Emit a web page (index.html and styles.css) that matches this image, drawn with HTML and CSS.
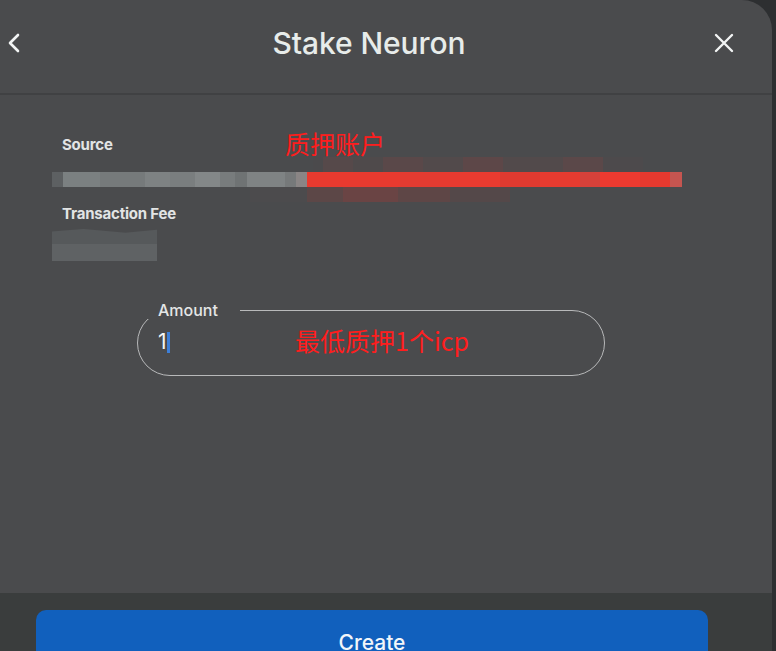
FILE: index.html
```html
<!DOCTYPE html>
<html lang="en">
<head>
<meta charset="utf-8">
<title>Stake Neuron</title>
<link rel="stylesheet" href="styles.css">
</head>
<body>
<div class="dialog">
  <header class="header">
    <button class="icon-btn back" aria-label="Back">
      <svg width="14" height="20" viewBox="0 0 14 20"><path d="M11 2 L3 10 L11 18" fill="none" stroke="#f2f4f4" stroke-width="2.6" stroke-linecap="round" stroke-linejoin="round"/></svg>
    </button>
    <h1 class="title">Stake Neuron</h1>
    <button class="icon-btn close" aria-label="Close">
      <svg width="20" height="20" viewBox="0 0 20 20"><path d="M2 2 L18 18 M18 2 L2 18" fill="none" stroke="#f2f4f4" stroke-width="2.4" stroke-linecap="round"/></svg>
    </button>
  </header>

  <main class="content">
    <section class="info">
      <div class="label">Source</div>
      <div class="blur-wrap">
        <div class="blur-above"></div>
        <div class="addr-bar"></div>
        <div class="blur-below"></div>
      </div>
      <div class="label fee-label">Transaction Fee</div>
      <div class="fee-blur"></div>
      <span class="note note-source">质押账户</span>
    </section>

    <fieldset class="amount">
      <legend class="amount-legend">Amount</legend>
      <div class="amount-value"><span class="digit">1</span><span class="caret"></span></div>
      <span class="note note-amount">最低质押1个icp</span>
    </fieldset>
  </main>

  <footer class="footer">
    <button class="create">Create</button>
  </footer>
</div>
</body>
</html>
```

FILE: styles.css
```css
* { box-sizing: border-box; }

html, body {
  margin: 0;
  padding: 0;
  height: 651px;
  overflow: hidden;
  background: #2d2f31;
  font-family: Inter, "Noto Sans", sans-serif;
}

.dialog {
  width: 772px;
  height: 651px;
  background: #4a4b4d;
  border-top-right-radius: 30px;
  display: flex;
  flex-direction: column;
  overflow: hidden;
}

.header {
  height: 95px;
  flex: none;
  display: flex;
  align-items: flex-start;
  justify-content: space-between;
  padding: 26px 36px 0 2px;
  border-bottom: 2px solid #404143;
}

.icon-btn {
  background: none;
  border: none;
  padding: 0;
  width: 24px;
  height: 34px;
  display: flex;
  align-items: center;
  justify-content: center;
  cursor: pointer;
}

.title {
  margin: 0;
  font-size: 30px;
  font-weight: 500;
  color: #e7ecea;
  line-height: 34px;
  letter-spacing: -0.1px;
}

.content {
  flex: 1;
  padding: 41px 0 0 62px;
  display: flex;
  flex-direction: column;
}

.info {
  position: relative;
  display: flex;
  flex-direction: column;
}

.label {
  font-size: 15px;
  font-weight: 700;
  color: #e2e4e4;
  line-height: 18px;
  letter-spacing: -0.2px;
}

.blur-wrap {
  margin: 3px 0 0 -10px;
  display: flex;
  flex-direction: column;
}

.blur-above {
  height: 15px;
  margin-left: 261px;
  width: 330px;
  background: linear-gradient(90deg,
    #4b4a4c 0 10px, #56494a 10px 40px, #4f4a4b 40px 70px, #5a4849 70px 110px,
    #524a4b 110px 150px, #5d4748 150px 190px, #524a4b 190px 250px, #5b4849 250px 290px, #4d4a4c 290px 330px);
}

.addr-bar {
  height: 15px;
  width: 630px;
  background: linear-gradient(90deg,
    #5d6062 0 11px, #7b8081 11px 48px, #767a7b 48px 93px, #7e8283 93px 118px,
    #7a7e7f 118px 143px, #838788 143px 168px, #787c7d 168px 183px, #6f7374 183px 195px,
    #7f8384 195px 233px, #76797a 233px 244px, #8a8585 244px 255px,
    #e83a2f 255px 348px, #e33b31 348px 388px, #e73a30 388px 408px, #e93b30 408px 448px,
    #df3a30 448px 488px, #e63b30 488px 528px, #d6413a 528px 548px, #ec3a30 548px 588px,
    #e5392f 588px 618px, #c55550 618px 630px);
}

.blur-below {
  height: 15px;
  margin-left: 198px;
  width: 260px;
  background: linear-gradient(90deg,
    #4c4b4d 0 57px, #5c4747 57px 93px, #6a4444 93px 148px, #5e4646 148px 200px, #544849 200px 260px);
}

.fee-label {
  margin-top: 3px;
}

.fee-blur {
  margin: 6px 0 0 -10px;
  width: 105px;
  height: 32px;
  background: linear-gradient(180deg, #56595b 0 15px, #5f6264 15px 32px);
  clip-path: polygon(0 8%, 30% 0, 70% 12%, 100% 2%, 100% 100%, 0 100%);
}

.note {
  position: absolute;
  color: #ff1d1d;
  font-family: "Noto Sans CJK SC", sans-serif;
  font-size: 25px;
  line-height: 30px;
  font-weight: 400;
  white-space: nowrap;
}

.note-source {
  left: 223px;
  top: -8px;
}

.amount {
  position: relative;
  margin: 40px 0 0 75px;
  width: 468px;
  height: 75px;
  padding: 0 0 0 20px;
  border: 1.5px solid #b8b9ba;
  border-radius: 33px;
  min-inline-size: 0;
}

.amount-legend {
  padding: 0 22px 0 20px;
  margin-left: -20px;
  font-size: 16px;
  font-weight: 500;
  color: #e4e6e6;
  line-height: 18px;
}

.amount-value {
  display: flex;
  align-items: center;
  height: 46px;
}

.digit {
  font-size: 21px;
  color: #f4f6f6;
  line-height: 24px;
}

.caret {
  width: 3px;
  height: 21px;
  background: #3d7fd8;
}

.note-amount {
  left: 157px;
  top: 6px;
}

.footer {
  height: 58px;
  flex: none;
  background: #3a3d3d;
  padding: 17px 0 0 36px;
}

.create {
  width: 672px;
  height: 64px;
  border: none;
  border-radius: 10px;
  background: #1160bd;
  color: #f2f6fa;
  font-family: Inter, "Noto Sans", sans-serif;
  font-size: 21px;
  font-weight: 500;
  padding: 0;
  cursor: pointer;
}
```
